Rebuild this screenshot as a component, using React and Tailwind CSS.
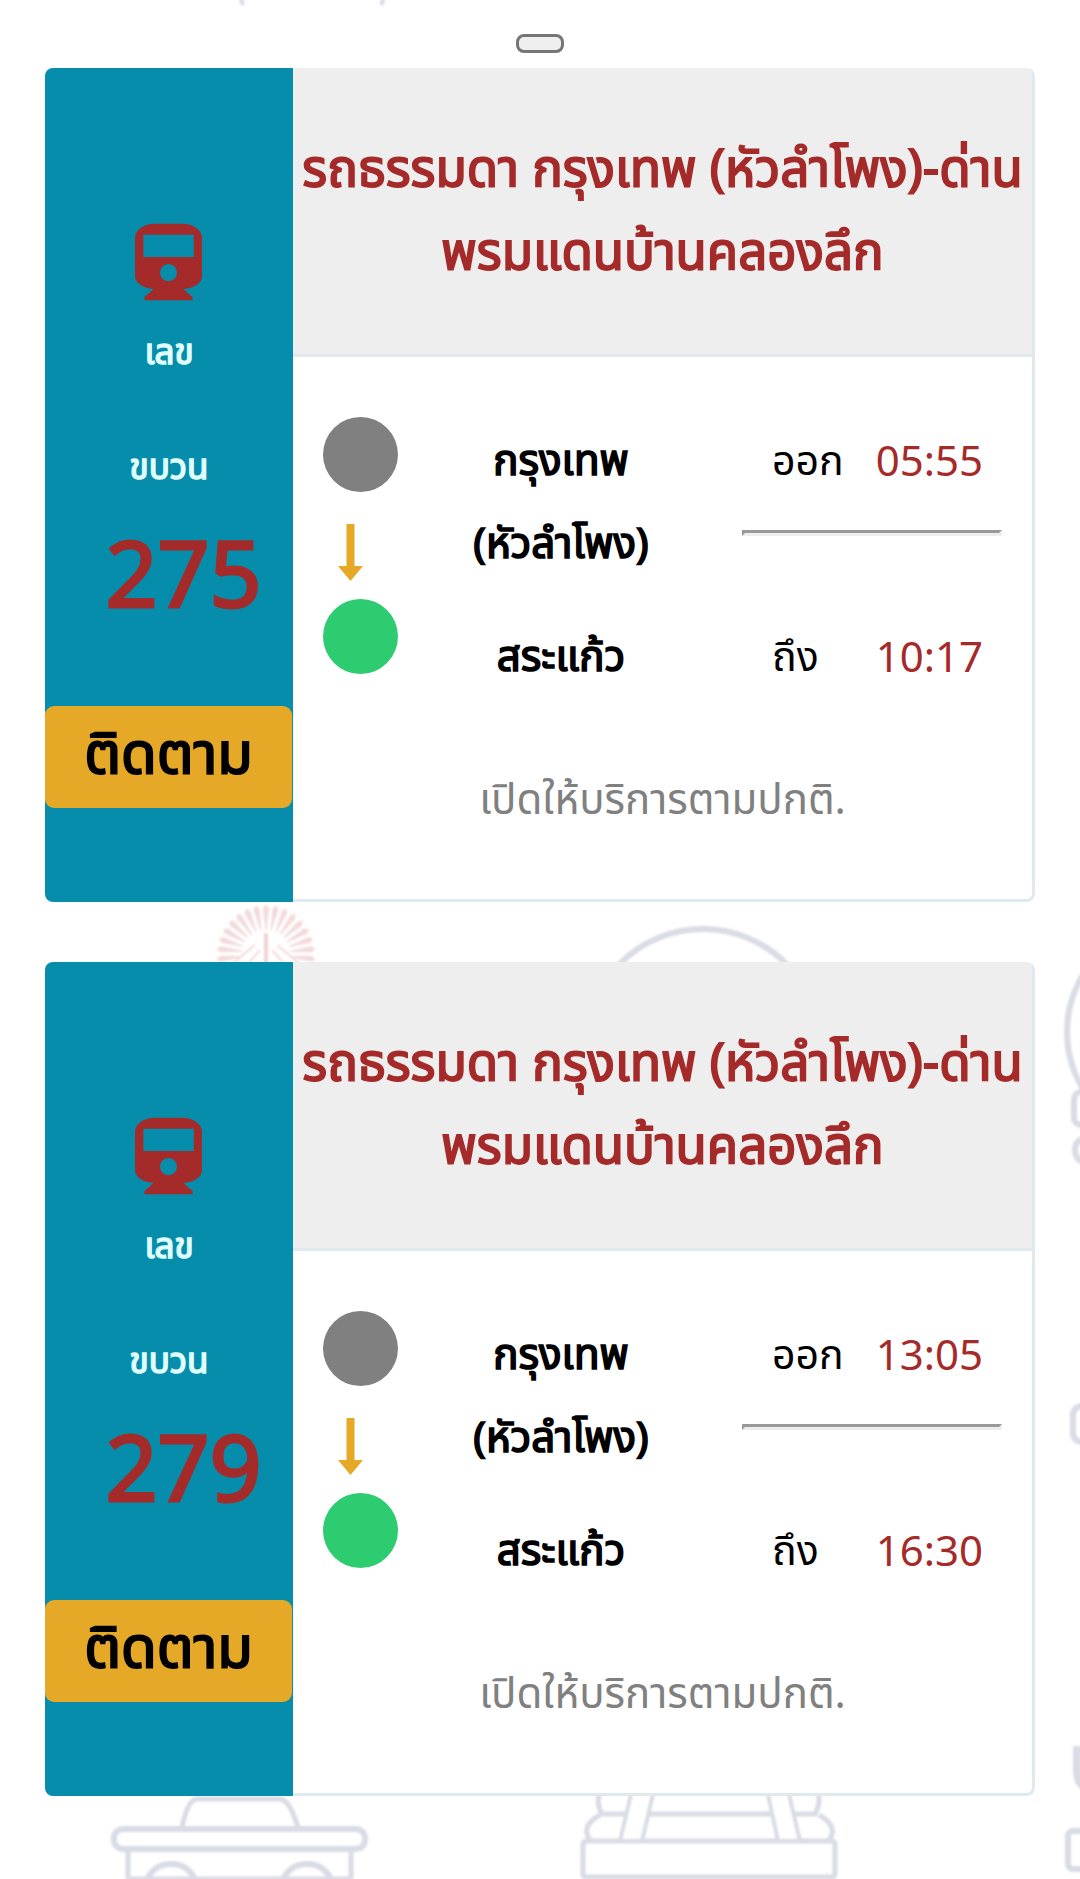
/**
 * App.jsx — train timetable cards
 */

const trains = [
  {
    no: '275',
    name: ['รถธรรมดา กรุงเทพ (หัวลำโพง)-ด่าน', 'พรมแดนบ้านคลองลึก'],
    from: ['กรุงเทพ', '(หัวลำโพง)'],
    to: 'สระแก้ว',
    depart: '05:55',
    arrive: '10:17',
  },
  {
    no: '279',
    name: ['รถธรรมดา กรุงเทพ (หัวลำโพง)-ด่าน', 'พรมแดนบ้านคลองลึก'],
    from: ['กรุงเทพ', '(หัวลำโพง)'],
    to: 'สระแก้ว',
    depart: '13:05',
    arrive: '16:30',
  },
];

const PETALS = Array.from({ length: 17 }, (_, i) => -96 + i * 12);

// Faint landmark line art behind the cards
function Backdrop() {
  return (
    <svg className="absolute inset-0 -z-10" width="1080" height="1879" viewBox="0 0 1080 1879" fill="none">
      <defs>
        <filter id="soft" x="-5%" y="-5%" width="110%" height="110%">
          <feGaussianBlur stdDeviation="1" />
        </filter>
      </defs>
      <g stroke="#d9dbe5" strokeWidth="6" filter="url(#soft)">
        <path d="M240 -8Q241 0 243 5M385 -8Q384 0 381 5" strokeWidth="4" />
        <circle cx="703" cy="1046" r="117" />
        <circle cx="1177" cy="1032" r="110" />
        <rect x="1074" y="1092" width="60" height="33" rx="7" />
        <path d="M1090 1138Q1075 1138 1075 1150T1090 1164" />
        <rect x="1073" y="1406" width="60" height="36" rx="9" />
        <path d="M1077 1746V1772Q1077 1786 1090 1788" strokeWidth="8" />
        <rect x="1068" y="1831" width="60" height="38" rx="5" />
        <path d="M182 1827Q188 1799 197 1799H280Q289 1799 298 1827" strokeWidth="5" />
        <rect x="114" y="1829" width="251" height="20" rx="9" />
        <path d="M128 1849V1879M351 1849V1879M128 1879H351" strokeWidth="5" />
        <path d="M146 1882Q153 1864 171 1864T196 1882M282 1882Q289 1864 307 1864T332 1882" />
        <path d="M601 1790Q595 1802 602 1814H815Q822 1802 817 1790" strokeWidth="5" />
        <path d="M600 1815Q580 1826 590 1840M819 1815Q839 1826 829 1840" strokeWidth="5" />
        <rect x="583" y="1841" width="252" height="36" rx="3" strokeWidth="5" />
        <path d="M632 1790L620 1841H642L654 1790ZM767 1790L778 1841H800L788 1790Z" fill="#fff" strokeWidth="4" />
      </g>
      <g stroke="#f3dada" filter="url(#soft)">
        {PETALS.map((deg) => (
          <path key={deg} d="M266 930L263.5 909Q266 902 268.5 909Z" fill="#f3dada" strokeWidth="1" transform={`rotate(${deg} 266 954)`} />
        ))}
        <path d="M266 933V966" stroke="#f1d3d3" strokeWidth="4" />
        <path d="M260 950L246 966M272 950L286 966M255 945L232 964M277 945L300 964" strokeWidth="2" />
      </g>
    </svg>
  );
}

function TrainIcon() {
  return (
    <svg className="h-[78px] w-[67px]" viewBox="0 0 448 512" fill="#a52a2a">
      <path
        fillRule="evenodd"
        d="M128 0H320C390 0 448 43 448 96V352C448 398 392 434 324 436L384 490Q392 512 376 512H72Q56 512 64 490L124 436C56 434 0 398 0 352V96C0 43 58 0 128 0ZM56 73V222H393V73ZM224 270A57 57 0 1 0 224 384A57 57 0 1 0 224 270Z"
      />
    </svg>
  );
}

function DownArrow() {
  return (
    <svg className="ml-[15px] h-[57px] w-[25px]" viewBox="0 0 25 57" fill="#e5a927">
      <path d="M8.5 0H16.5V42H25L12.5 57L0 42H8.5Z" />
    </svg>
  );
}

function TrainCard({ train }) {
  return (
    <article className="flex h-[834px] w-[990px] overflow-hidden rounded-[8px] bg-white">
      <div className="flex w-[248px] shrink-0 flex-col items-center bg-[#068dab]">
        <div className="mt-[155px] mr-px">
          <TrainIcon />
        </div>
        <p className="mt-[21px] h-[58px] text-[35px] leading-[58px] text-[#e0ffff] [-webkit-text-stroke:1.5px_#e0ffff]">เลข</p>
        <p className="mt-[57px] h-[58px] text-[35px] leading-[58px] text-[#e0ffff] [-webkit-text-stroke:1.5px_#e0ffff]">ขบวน</p>
        <p className="mt-[5px] ml-[29px] h-[144px] text-[91px] leading-[144px] text-[#a52a2a] [-webkit-text-stroke:3px_#a52a2a]">
          {train.no}
        </p>
        <button className="mt-[62px] mr-px h-[102px] w-[247px] rounded-[9px] bg-[#e5a927] pb-3 text-[58px] leading-[86px] text-black [-webkit-text-stroke:2.1px_#000]">
          ติดตาม
        </button>
      </div>

      <div className="flex min-w-0 flex-1 flex-col rounded-r-[8px] border-r-[3px] border-b-[3px] border-[#e0e8f0]">
        <h2 className="flex h-[289px] flex-col items-center border-b-[3px] border-[#e0e8f0] bg-[#eee] pt-[57px] text-[51px] leading-[83px] font-normal whitespace-nowrap text-[#a52a2a] [-webkit-text-stroke:1.9px_#a52a2a]">
          {train.name.map((line) => (
            <span key={line}>{line}</span>
          ))}
        </h2>

        <div className="flex h-[375px] pl-[30px]">
          <div className="w-[75px] pt-[60px]">
            <div className="h-[75px] w-[75px] rounded-full bg-[#808080]" />
            <div className="pt-8 pb-[18px]">
              <DownArrow />
            </div>
            <div className="h-[75px] w-[75px] rounded-full bg-[#2ecc71]" />
          </div>

          <div className="ml-[53px] w-[220px] pt-[60px] text-center text-[42px] leading-[83px] whitespace-nowrap text-black [-webkit-text-stroke:1.7px_#000]">
            {train.from.map((line) => (
              <p key={line}>{line}</p>
            ))}
            <p className="mt-[30px]">{train.to}</p>
          </div>

          <div className="ml-[71px] w-[260px] pt-[61px] text-[42px] leading-[83px] text-black">
            <div className="flex justify-between pr-[19px] pl-[30px]">
              <span className="text-[41px]">ออก</span>
              <span className="text-[#a52a2a]">{train.depart}</span>
            </div>
            <hr className="mt-[29px] h-[6px] border-[3px] border-t-[#9a9a9a] border-r-[#eee] border-b-[#eee] border-l-[#9a9a9a]" />
            <div className="mt-[78px] flex justify-between pr-[19px] pl-[30px]">
              <span className="text-[41px]">ถึง</span>
              <span className="text-[#a52a2a]">{train.arrive}</span>
            </div>
          </div>
        </div>

        <p className="mt-[24px] text-center text-[42px] leading-[83px] text-[#808080]">เปิดให้บริการตามปกติ.</p>
      </div>
    </article>
  );
}

export default function App() {
  return (
    <main className="relative isolate flex h-[1879px] w-[1080px] flex-col overflow-hidden bg-white pl-[45px] font-['Noto_Sans','Noto_Sans_Thai',sans-serif]">
      <Backdrop />
      <div className="flex h-[68px] w-[990px] justify-center pt-[34px]">
        <button className="h-[19px] w-[48px] rounded-[8px] border-[3px] border-[#767676] bg-[#efefef]" />
      </div>
      <div className="flex flex-col gap-[60px]">
        {trains.map((t) => (
          <TrainCard key={t.no} train={t} />
        ))}
      </div>
    </main>
  );
}
